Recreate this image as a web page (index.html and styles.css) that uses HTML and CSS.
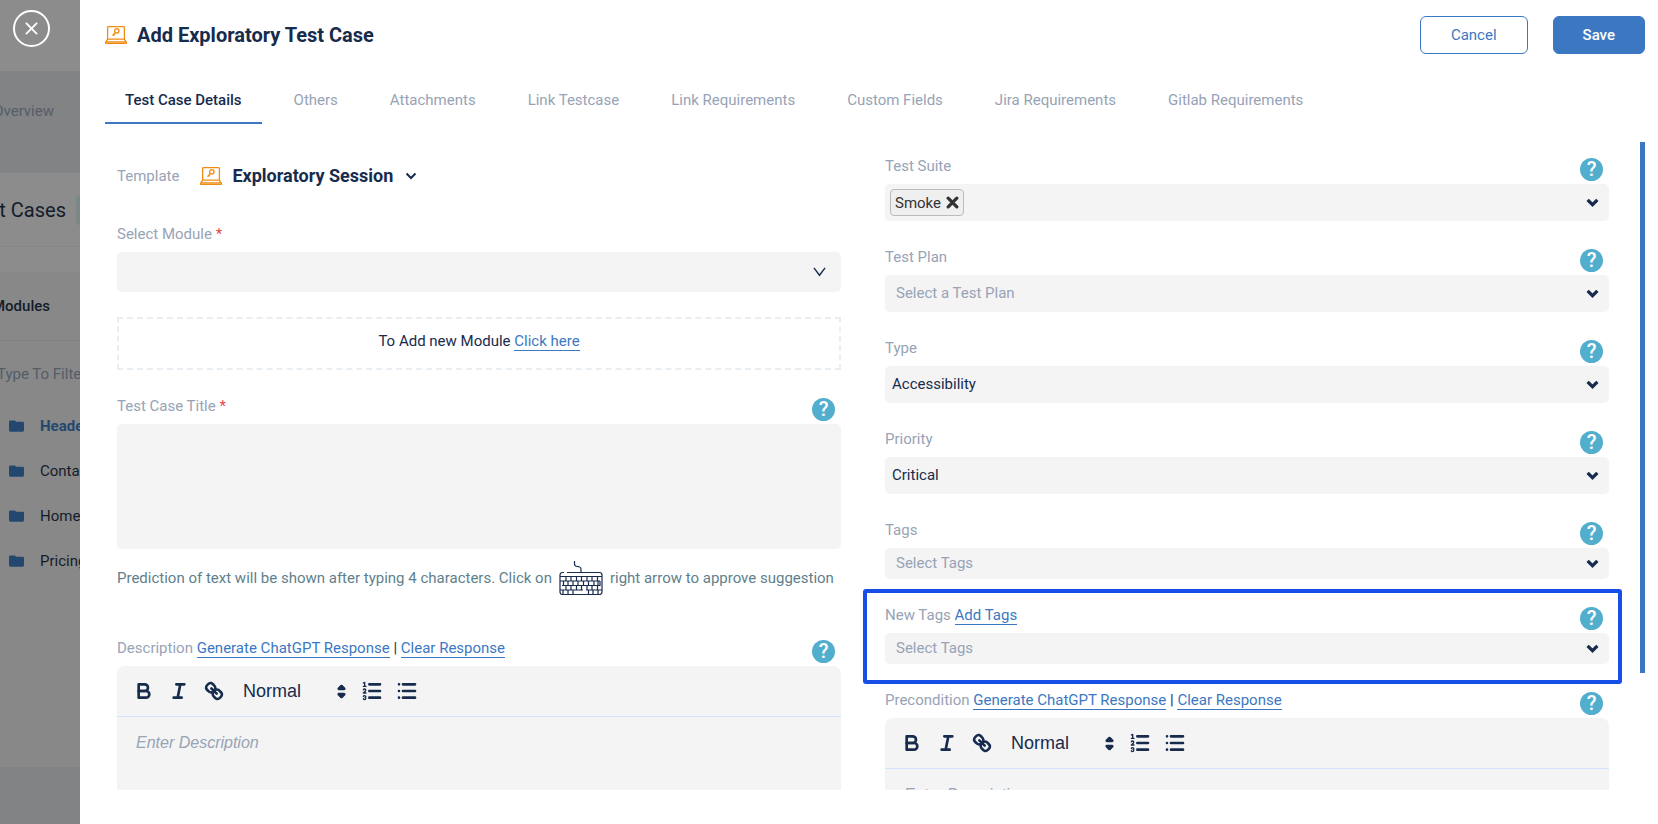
FILE: index.html
```html
<!DOCTYPE html>
<html lang="en">
<head>
  <meta charset="UTF-8">
  <meta name="viewport" content="width=device-width, initial-scale=1.0">
  <title>Add Exploratory Test Case</title>
  <link rel="stylesheet" href="styles.css">
</head>
<body>
  <!-- shared icons -->
  <svg class="sprite" aria-hidden="true">
    <symbol id="laptop" viewBox="0 0 22 18">
      <path d="M2.6 13.2V1.6a1 1 0 0 1 1-1h14.8a1 1 0 0 1 1 1v11.6M2.6 13.2h16.8l2 3.2a.7.7 0 0 1-.6 1H1.2a.7.7 0 0 1-.6-1zM1 15.8h20M7.4 9.6l2.8-3M9.8 8.3L8.6 9.6"/>
      <circle cx="11.8" cy="4.8" r="2.2"/>
    </symbol>
    <symbol id="chevron" viewBox="0 0 12 8">
      <path d="M1.5 1.5L6 6l4.5-4.5"/>
    </symbol>
    <symbol id="folder" viewBox="0 0 16 12">
      <path d="M1.5 0h4.6l1.6 1.4h6.8A1.5 1.5 0 0 1 16 2.9v7.6A1.5 1.5 0 0 1 14.5 12h-13A1.5 1.5 0 0 1 0 10.5v-9A1.5 1.5 0 0 1 1.5 0z"/>
    </symbol>
    <symbol id="bold" viewBox="0 0 18 18">
      <path d="M5,4H9.5A2.5,2.5,0,0,1,12,6.5A2.5,2.5,0,0,1,9.5,9H5Z"/>
      <path d="M5,9h5.5A2.5,2.5,0,0,1,13,11.5A2.5,2.5,0,0,1,10.5,14H5Z"/>
    </symbol>
    <symbol id="italic" viewBox="0 0 18 18">
      <path d="M7 4h6M5 14h6M8 14l2-10"/>
    </symbol>
    <symbol id="link" viewBox="0 0 18 18">
      <path d="M7 7l4 4"/>
      <path d="M8.9,4.577a3.476,3.476,0,0,1,.36,4.679A3.476,3.476,0,0,1,4.577,8.9C3.185,7.5,2.035,6.4,4.217,4.217S7.5,3.185,8.9,4.577Z"/>
      <path d="M13.423,9.1a3.476,3.476,0,0,0-4.679-.36,3.476,3.476,0,0,0,.36,4.679c1.392,1.392,2.5,2.542,4.679.36S14.815,10.5,13.423,9.1Z"/>
    </symbol>
    <symbol id="ordered" viewBox="0 0 18 18">
      <path d="M7 4h8M7 9h8M7 14h8"/>
      <path class="thin" d="M2.5 5.5h2M3.5 5.5v-3l-1 .5M4.5 10.5h-2c0-.234,1.85-1.076,1.85-2.234A.959.959,0,0,0,2.5,8.156M2.5 14.846a.959.959,0,0,0,1.85-.109A.7.7,0,0,0,3.75,14a.688.688,0,0,0,.6-.736.959.959,0,0,0-1.85-.109"/>
    </symbol>
    <symbol id="bullet" viewBox="0 0 18 18">
      <path d="M6 4h9M6 9h9M6 14h9M3 4h0M3 9h0M3 14h0"/>
    </symbol>
    <symbol id="updown" viewBox="5 2 8 14">
      <path d="M7 11l2 2 2-2zM7 7l2-2 2 2z"/>
    </symbol>
  </svg>

  <div class="page">
    <aside class="backdrop">
      <div class="backdrop-top">
        <button class="close" aria-label="Close">
          <svg viewBox="0 0 14 14"><path d="M1 1l12 12M13 1L1 13"/></svg>
        </button>
      </div>
      <div class="backdrop-crumb">Overview</div>
      <div class="backdrop-title">Test Cases<span class="count"></span></div>
      <div class="backdrop-gap"></div>
      <div class="backdrop-modules">Modules</div>
      <div class="backdrop-filter">Type To Filter</div>
      <ul class="modules">
        <li class="active"><svg><use href="#folder"/></svg>Header</li>
        <li><svg><use href="#folder"/></svg>Contact</li>
        <li><svg><use href="#folder"/></svg>Home</li>
        <li><svg><use href="#folder"/></svg>Pricing</li>
      </ul>
      <div class="backdrop-footer"></div>
    </aside>

    <main class="panel">
      <header class="header">
        <h1><svg class="laptop"><use href="#laptop"/></svg>Add Exploratory Test Case</h1>
        <div class="actions">
          <button class="btn btn-cancel">Cancel</button>
          <button class="btn btn-save">Save</button>
        </div>
      </header>

      <nav class="tabs">
        <a href="#" class="tab active">Test Case Details</a>
        <a href="#" class="tab">Others</a>
        <a href="#" class="tab">Attachments</a>
        <a href="#" class="tab">Link Testcase</a>
        <a href="#" class="tab">Link Requirements</a>
        <a href="#" class="tab">Custom Fields</a>
        <a href="#" class="tab">Jira Requirements</a>
        <a href="#" class="tab">Gitlab Requirements</a>
      </nav>

      <div class="content">
        <form class="columns">
          <div class="col">
            <div class="template">
              <span class="label">Template</span>
              <button type="button" class="template-button">
                <svg class="laptop"><use href="#laptop"/></svg>
                Exploratory Session
                <svg class="chevron"><use href="#chevron"/></svg>
              </button>
            </div>

            <div class="field module-field">
              <div class="field-head">
                <label class="label" for="module">Select Module <span class="required">*</span></label>
              </div>
              <div class="select select-module">
                <select id="module"><option></option></select>
                <svg viewBox="0 0 14 10"><path d="M1 .5l6 8 6-8"/></svg>
              </div>
            </div>

            <div class="add-module">To Add new Module <a href="#" class="link">Click here</a></div>

            <div class="field">
              <div class="field-head">
                <label class="label" for="title">Test Case Title <span class="required">*</span></label>
                <button type="button" class="help">?</button>
              </div>
              <textarea id="title" class="title-input"></textarea>
            </div>

            <div class="hint">
              <span>Prediction of text will be shown after typing 4 characters. Click on</span>
              <svg class="keyboard" viewBox="0 0 44 34">
                <path d="M15.5 0v3q0 2.5 3 2.5 3.5 0 3.5 3V11"/>
                <path d="M5 11.5H3.5A2.5 2.5 0 0 0 1 14v17a2.5 2.5 0 0 0 2.5 2.5h37A2.5 2.5 0 0 0 43 31V14a2.5 2.5 0 0 0-2.5-2.5H8"/>
                <path d="M1 15.5h42M1 20h40M3 24.5h38M1 29h23M27 29h16M41 20v5"/>
                <path d="M7 15.5V20M12 15.5V20M17.5 15.5V20M22.5 15.5V20M28 15.5V20M33 15.5V20M38.5 15.5V20M4.5 20v4.5M9 20v4.5M14 20v4.5M19 20v4.5M24.5 20v4.5M29.5 20v4.5M35 20v4.5M39 20v4.5M7 24.5V29M12 24.5V29M17.5 24.5V29M22.5 24.5V29M28 24.5V29M33 24.5V29M38.5 24.5V29M4 29v4.5M9 29v4.5M14 29v4.5M29.5 29v4.5M34 29v4.5M39 29v4.5"/>
              </svg>
              <span>right arrow to approve suggestion</span>
            </div>

            <div class="field">
              <div class="field-head">
                <div class="label">Description <a href="#" class="link">Generate ChatGPT Response</a> <span class="bar">|</span> <a href="#" class="link">Clear Response</a></div>
                <button type="button" class="help">?</button>
              </div>
              <div class="editor">
                <div class="toolbar">
                  <button type="button" aria-label="Bold"><svg><use href="#bold"/></svg></button>
                  <button type="button" aria-label="Italic"><svg><use href="#italic"/></svg></button>
                  <button type="button" aria-label="Link"><svg><use href="#link"/></svg></button>
                  <div class="picker">
                    <select aria-label="Text style"><option>Normal</option></select>
                    <svg><use href="#updown"/></svg>
                  </div>
                  <button type="button" aria-label="Ordered list"><svg><use href="#ordered"/></svg></button>
                  <button type="button" aria-label="Bullet list"><svg><use href="#bullet"/></svg></button>
                </div>
                <textarea aria-label="Description" placeholder="Enter Description"></textarea>
              </div>
            </div>
          </div>

          <div class="col col-right">
            <div class="field">
              <div class="field-head">
                <label class="label" for="suite">Test Suite</label>
                <button type="button" class="help">?</button>
              </div>
              <div class="select multi">
                <span class="chip">Smoke
                  <button type="button" aria-label="Remove Smoke"><svg viewBox="0 0 12 12"><path d="M2 2l8 8M10 2l-8 8"/></svg></button>
                </span>
                <input id="suite" type="text">
                <svg class="chevron"><use href="#chevron"/></svg>
              </div>
            </div>

            <div class="field">
              <div class="field-head">
                <label class="label" for="plan">Test Plan</label>
                <button type="button" class="help">?</button>
              </div>
              <div class="select">
                <select id="plan" class="empty"><option>Select a Test Plan</option></select>
                <svg class="chevron"><use href="#chevron"/></svg>
              </div>
            </div>

            <div class="field">
              <div class="field-head">
                <label class="label" for="type">Type</label>
                <button type="button" class="help">?</button>
              </div>
              <div class="select">
                <select id="type"><option>Accessibility</option></select>
                <svg class="chevron"><use href="#chevron"/></svg>
              </div>
            </div>

            <div class="field">
              <div class="field-head">
                <label class="label" for="priority">Priority</label>
                <button type="button" class="help">?</button>
              </div>
              <div class="select">
                <select id="priority"><option>Critical</option></select>
                <svg class="chevron"><use href="#chevron"/></svg>
              </div>
            </div>

            <div class="field">
              <div class="field-head">
                <label class="label" for="tags">Tags</label>
                <button type="button" class="help">?</button>
              </div>
              <div class="select select-small">
                <select id="tags" class="empty"><option>Select Tags</option></select>
                <svg class="chevron"><use href="#chevron"/></svg>
              </div>
            </div>

            <div class="field highlight">
              <div class="field-head">
                <div class="label"><label for="newTags">New Tags</label> <a href="#" class="link">Add Tags</a></div>
                <button type="button" class="help">?</button>
              </div>
              <div class="select select-small">
                <select id="newTags" class="empty"><option>Select Tags</option></select>
                <svg class="chevron"><use href="#chevron"/></svg>
              </div>
            </div>

            <div class="field">
              <div class="field-head">
                <div class="label">Precondition <a href="#" class="link">Generate ChatGPT Response</a> <span class="bar">|</span> <a href="#" class="link">Clear Response</a></div>
                <button type="button" class="help">?</button>
              </div>
              <div class="editor">
                <div class="toolbar">
                  <button type="button" aria-label="Bold"><svg><use href="#bold"/></svg></button>
                  <button type="button" aria-label="Italic"><svg><use href="#italic"/></svg></button>
                  <button type="button" aria-label="Link"><svg><use href="#link"/></svg></button>
                  <div class="picker">
                    <select aria-label="Text style"><option>Normal</option></select>
                    <svg><use href="#updown"/></svg>
                  </div>
                  <button type="button" aria-label="Ordered list"><svg><use href="#ordered"/></svg></button>
                  <button type="button" aria-label="Bullet list"><svg><use href="#bullet"/></svg></button>
                </div>
                <textarea aria-label="Precondition" placeholder="Enter Description"></textarea>
              </div>
            </div>
          </div>
        </form>
        <div class="scroll-thumb"></div>
      </div>
    </main>
  </div>
</body>
</html>
```

FILE: styles.css
```css
:root {
  --navy: #172b4d;
  --grey: #97a3b6;
  --blue: #3c78c2;
  --teal: #52aecd;
  --box: #f4f4f4;
}

* {
  box-sizing: border-box;
}

body {
  margin: 0;
  font-family: Roboto, sans-serif;
  font-size: 15px;
  line-height: 24px;
  color: var(--navy);
  background: #fff;
}

button,
input,
select,
textarea {
  font: inherit;
  color: inherit;
  border: none;
  background: none;
  margin: 0;
  padding: 0;
}

button {
  cursor: pointer;
}

svg {
  display: block;
  fill: none;
  stroke: currentColor;
  flex-shrink: 0;
}

.sprite {
  position: absolute;
  width: 0;
  height: 0;
}

.page {
  display: flex;
  height: 100vh;
  overflow: hidden;
}

/* dimmed page behind the panel */
.backdrop {
  width: 80px;
  flex-shrink: 0;
  display: flex;
  flex-direction: column;
  overflow: hidden;
  white-space: nowrap;
  background: #888;
  color: #131c2a;
}

.backdrop-top {
  height: 71px;
  padding: 10px 13px;
  background: #8c8c8c;
}

.close {
  display: flex;
  align-items: center;
  justify-content: center;
  width: 37px;
  height: 37px;
  border: 2px solid #fff;
  border-radius: 50%;
  color: #fff;
}

.close svg {
  width: 13px;
  height: 13px;
  stroke-width: 2;
}

.backdrop-crumb,
.backdrop-title,
.backdrop-modules {
  display: flex;
  align-items: center;
  justify-content: flex-end;
}

.backdrop-crumb {
  height: 102px;
  padding: 0 26px 22px 0;
  background: #818385;
  color: #555d68;
}

.backdrop-title {
  height: 74px;
  font-size: 20px;
  background: #8c8c8c;
  border-bottom: 1px solid #85878c;
}

.count {
  flex-shrink: 0;
  width: 4px;
  height: 30px;
  margin-left: 10px;
  border-radius: 6px 0 0 6px;
  background: #7c8888;
}

.backdrop-gap {
  height: 25px;
  background: #8c8c8c;
}

.backdrop-modules {
  height: 69px;
  padding-right: 30px;
  font-weight: 500;
  border-bottom: 1px solid #7f8183;
}

.backdrop-filter {
  height: 53px;
  padding-top: 21px;
  margin-left: -3px;
  color: #545c68;
}

.modules {
  list-style: none;
  margin: 0;
  padding: 9px 0 0 9px;
  flex: 1;
}

.modules li {
  display: flex;
  align-items: center;
  gap: 16px;
  height: 45px;
}

.modules svg {
  width: 15px;
  height: 12px;
  fill: #24476f;
  stroke: none;
}

.modules .active {
  color: #24476f;
  font-weight: 700;
}

.backdrop-footer {
  height: 57px;
  background: #818385;
}

/* panel */
.panel {
  flex: 1;
  min-width: 0;
  display: flex;
  flex-direction: column;
  padding: 16px 13px 34px 25px;
}

.header {
  display: flex;
  align-items: center;
  justify-content: space-between;
}

h1 {
  display: flex;
  align-items: center;
  gap: 10px;
  margin: 0;
  font-size: 20px;
  font-weight: 700;
}

.laptop {
  width: 22px;
  height: 18px;
  color: #f08c14;
  stroke-width: 1.3;
}

.actions {
  display: flex;
  gap: 25px;
}

.btn {
  height: 38px;
  border: 1px solid var(--blue);
  border-radius: 6px;
}

.btn-cancel {
  padding: 0 30px;
  color: var(--blue);
}

.btn-save {
  padding: 0 29px;
  background: var(--blue);
  color: #fff;
  font-weight: 500;
}

.tabs {
  display: flex;
  gap: 12px;
  margin-top: 34px;
}

.tab {
  padding: 0 20px 10px;
  border-bottom: 2px solid transparent;
  color: var(--grey);
  text-decoration: none;
}

.tab.active {
  color: var(--navy);
  font-weight: 500;
  border-color: var(--blue);
}

.content {
  flex: 1;
  min-height: 0;
  display: flex;
  gap: 31px;
  margin-top: 18px;
  overflow: hidden;
}

.columns {
  flex: 1;
  display: grid;
  grid-template-columns: 1fr 1fr;
  gap: 44px;
  padding-left: 12px;
}

.scroll-thumb {
  width: 5px;
  height: 82%;
  background: var(--blue);
}

.col {
  min-width: 0;
}

.col-right {
  display: flex;
  flex-direction: column;
  gap: 24px;
  padding-top: 12px;
}

.label {
  color: var(--grey);
}

.required {
  color: #e5484d;
}

.link {
  color: var(--blue);
  text-decoration: none;
  border-bottom: 1px solid var(--blue);
}

.bar {
  color: var(--navy);
}

.field-head {
  display: flex;
  align-items: center;
  justify-content: space-between;
  height: 30px;
  padding-right: 6px;
}

.field-head > .label {
  padding-bottom: 6px;
}

.help {
  width: 23px;
  height: 23px;
  border-radius: 50%;
  background: var(--teal);
  color: #fff;
  font-size: 20px;
  font-weight: 500;
  line-height: 22px;
}

.template {
  display: flex;
  align-items: center;
  gap: 21px;
  height: 68px;
}

.template-button {
  display: flex;
  align-items: center;
  gap: 10px;
  font-size: 18px;
  font-weight: 700;
}

.template-button .chevron {
  margin-left: 2px;
}

.chevron {
  width: 12px;
  height: 8px;
  stroke-width: 2;
}

.module-field {
  margin-top: 12px;
}

.select {
  position: relative;
  height: 37px;
  border-radius: 5px;
  background: var(--box);
}

.select-small {
  height: 31px;
}

.select-module {
  height: 40px;
}

.select select {
  display: block;
  appearance: none;
  width: 100%;
  height: 100%;
  padding: 0 30px 2px 7px;
}

.select .empty {
  padding-left: 11px;
  color: var(--grey);
}

/* arrow lies over the native control */
.select > svg {
  position: absolute;
  top: 50%;
  right: 10px;
  width: 13px;
  height: 9px;
  margin-top: -5px;
  stroke-width: 3;
  pointer-events: none;
}

.select-module > svg {
  right: 15px;
  height: 10px;
  stroke-width: 1.5;
}

.multi {
  display: flex;
  align-items: center;
  gap: 6px;
  padding: 0 30px 0 5px;
}

.multi input {
  flex: 1;
  min-width: 0;
}

.chip {
  display: flex;
  align-items: center;
  gap: 5px;
  height: 27px;
  padding: 0 4px;
  border: 1px solid #bbb;
  border-radius: 4px;
  background: #efefef;
  color: #333;
  line-height: 22px;
}

.chip svg {
  width: 13px;
  height: 13px;
  stroke-width: 3;
  stroke-linecap: round;
}

.add-module {
  margin: 25px 0 24px;
  padding: 10px 0 15px;
  border: 2px dashed #e9eef3;
  text-align: center;
}

.title-input {
  display: block;
  width: 100%;
  height: 125px;
  padding: 10px;
  border-radius: 5px;
  background: var(--box);
  resize: none;
}

.hint {
  display: flex;
  align-items: center;
  gap: 7px;
  height: 58px;
  margin-bottom: 29px;
  color: #5f7f8c;
  white-space: nowrap;
}

.keyboard {
  width: 44px;
  height: 34px;
  color: var(--navy);
  stroke-width: 1.2;
}

.highlight {
  position: relative;
}

.highlight::after {
  content: '';
  position: absolute;
  inset: -14px -13px -20px -22px;
  border: 4px solid #174ee8;
  border-radius: 3px;
  pointer-events: none;
}

/* text editor */
.editor {
  border-radius: 8px 8px 0 0;
  background: var(--box);
  font-family: "Liberation Sans", Arial, sans-serif;
}

.toolbar {
  display: flex;
  align-items: center;
  gap: 11px;
  height: 51px;
  padding-left: 15px;
  border-bottom: 1px solid #d5e2fb;
}

.toolbar svg {
  width: 24px;
  height: 24px;
  stroke-width: 2;
  stroke-linecap: round;
  stroke-linejoin: round;
}

.thin {
  stroke-width: 1;
}

.picker {
  position: relative;
  width: 112px;
}

.picker select {
  display: block;
  appearance: none;
  width: 100%;
  padding-left: 6px;
  font-size: 18px;
}

.toolbar .picker svg {
  position: absolute;
  top: 3px;
  right: 2px;
  width: 11px;
  height: 19px;
  fill: currentColor;
  pointer-events: none;
}

.editor textarea {
  display: block;
  width: 100%;
  height: 160px;
  padding: 14px 19px;
  font-size: 16px;
  resize: none;
}

.editor textarea::placeholder {
  color: var(--grey);
  font-style: italic;
}
```
